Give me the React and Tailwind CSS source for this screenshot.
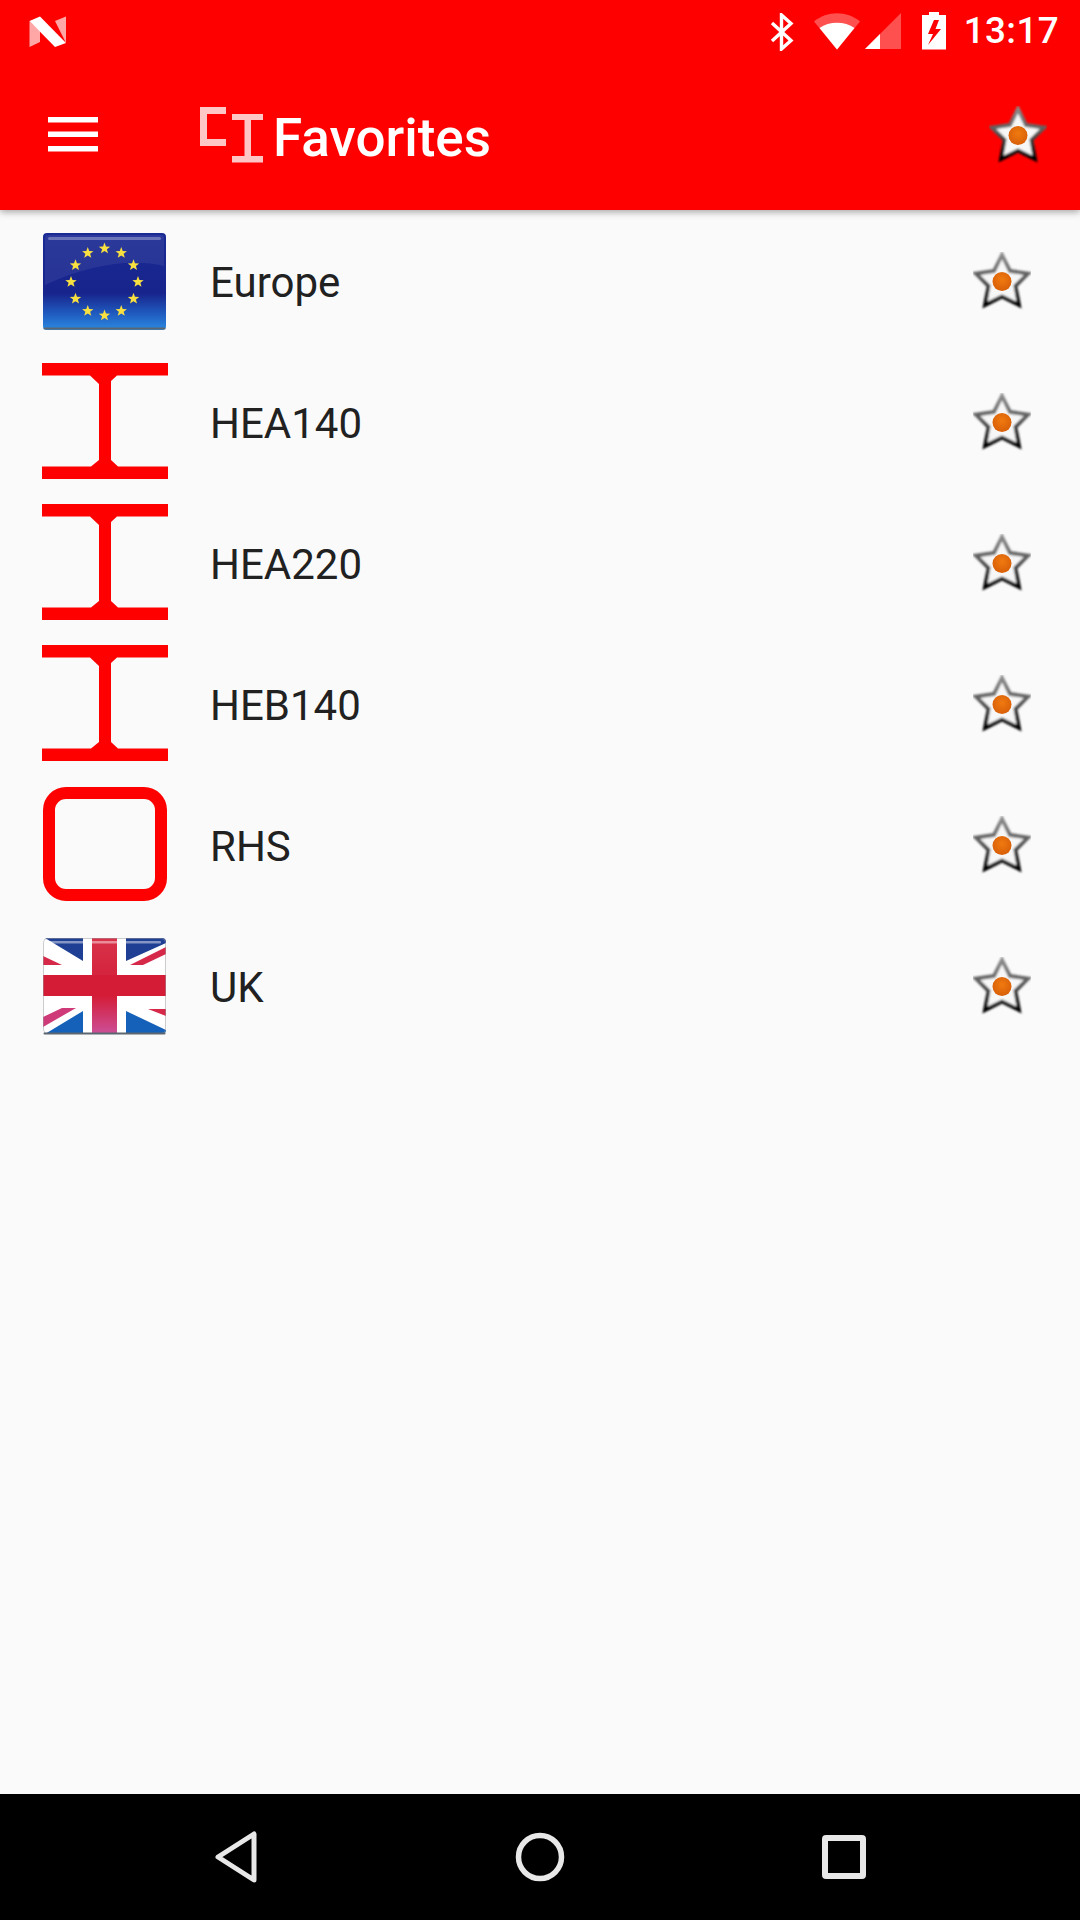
const items = [
  { name: "Europe", icon: "eu" },
  { name: "HEA140", icon: "beam" },
  { name: "HEA220", icon: "beam" },
  { name: "HEB140", icon: "beam" },
  { name: "RHS", icon: "rhs" },
  { name: "UK", icon: "uk" },
];

const NougatLogo = () => (
  <svg width="38" height="32" viewBox="0 0 38 32" className="ml-[29px] mt-[16px]">
    <polygon points="0.5,5 11,15 11,26 0.5,31" fill="#ffa6a6" />
    <polygon points="26,5 37,0.5 37,27" fill="#ffa6a6" />
    <polygon points="0.5,5 11,0.5 37,27 26,31" fill="#fff" />
  </svg>
);

const Bluetooth = () => (
  <svg width="24" height="38" viewBox="0 0 24 38" fill="none" stroke="#fff" strokeWidth="3.4">
    <path d="M2 10 L21 27.5 L11.5 36 V2 L21 10.5 L2 28" />
  </svg>
);

const Wifi = () => (
  <svg width="46" height="37" viewBox="0 0 46 37">
    <path d="M0 8.5 C13 -2.5 33 -2.5 46 8.5 L23 36.5 Z" fill="#ff5050" />
    <path d="M5.5 15 C15 8 31 8 40.5 15 L23 36.5 Z" fill="#fff" />
  </svg>
);

const Signal = () => (
  <svg width="36" height="37" viewBox="0 0 36 37">
    <polygon points="36,0 36,36 0,36" fill="#ff5050" />
    <polygon points="15,21 15,36 0,36" fill="#fff" />
  </svg>
);

const Battery = () => (
  <svg width="24" height="38" viewBox="0 0 24 38">
    <path d="M7 0 H17 V3 H24 V37.5 H0 V3 H7 Z" fill="#fff" />
    <polygon points="12,8 6,22 11,22 6,33 19,17 13.5,17 17,8" fill="#ff0000" />
  </svg>
);

const Hamburger = () => (
  <svg width="50" height="36" viewBox="0 0 50 36" fill="#fff">
    <rect x="0" y="0" width="50" height="5.5" />
    <rect x="0" y="14.5" width="50" height="5.5" />
    <rect x="0" y="29" width="50" height="5.5" />
  </svg>
);

const TitleIcon = () => (
  <svg width="63" height="56" viewBox="0 0 63 56" fill="#ffc6c6">
    <path d="M0 0 H26 V7 H7 V32 H26 V39 H0 Z" />
    <path d="M32 7 H63 V13 H51 V49 H63 V55.5 H32 V49 H44.5 V13 H32 Z" />
  </svg>
);

const FavStar = ({ id }) => (
  <svg width="58" height="58" viewBox="0 0 58 58">
    <defs>
      <linearGradient id={id} x1="0" y1="0" x2="0" y2="1">
        <stop offset="0" stopColor="#8a8a8a" />
        <stop offset="0.45" stopColor="#5a5a5a" />
        <stop offset="1" stopColor="#000" />
      </linearGradient>
      <radialGradient id={id + "-dot"} cx="0.5" cy="0.4" r="0.6">
        <stop offset="0" stopColor="#f07a10" />
        <stop offset="1" stopColor="#d85f08" />
      </radialGradient>
      <filter id={id + "-soft"} x="-10%" y="-10%" width="120%" height="120%">
        <feGaussianBlur stdDeviation="0.8" />
      </filter>
    </defs>
    <polygon
      points="29,3 37,19 55,21.5 42.5,34 46,53 29,44.5 12,53 15.5,34 3,21.5 21,19"
      fill="#f7f7f7"
      stroke={`url(#${id})`}
      strokeWidth="3.8"
      strokeLinejoin="miter"
      filter={`url(#${id}-soft)`}
    />
    <circle cx="29" cy="29.5" r="9.5" fill={`url(#${id}-dot)`} />
  </svg>
);

const Beam = () => (
  <svg width="126" height="116" viewBox="0 0 126 116" fill="#ff0000">
    <path d="M0 0 H126 V12.5 H75 L69 18 V97 L76 103.5 H126 V116 H0 V103.5 H49 L57 97 V21 L48 12.5 H0 Z" />
  </svg>
);

const Rhs = () => (
  <svg width="124" height="114" viewBox="0 0 124 114" fill="none">
    <rect x="6" y="6" width="112" height="102" rx="17" stroke="#ff0000" strokeWidth="12" />
  </svg>
);

const starPoints = (cx, cy, r) => {
  const pts = [];
  for (let i = 0; i < 10; i++) {
    const rad = i % 2 === 0 ? r : r * 0.42;
    const a = (Math.PI / 5) * i - Math.PI / 2;
    pts.push(`${cx + rad * Math.cos(a)},${cy + rad * Math.sin(a)}`);
  }
  return pts.join(" ");
};

const EuFlag = () => (
  <svg width="123" height="97" viewBox="0 0 123 97">
    <defs>
      <linearGradient id="eu-bg" x1="0" y1="0" x2="0" y2="1">
        <stop offset="0" stopColor="#1a2a94" />
        <stop offset="0.62" stopColor="#17248c" />
        <stop offset="0.85" stopColor="#2160c4" />
        <stop offset="1" stopColor="#2b8ae0" />
      </linearGradient>
    </defs>
    <rect x="0" y="0" width="123" height="97" rx="4" fill="url(#eu-bg)" />
    <path d="M2 5 Q2 2 5 2 H118 Q121 2 121 5 V33 C90 26 50 30 2 52 Z" fill="#fff" opacity="0.07" />
    <rect x="5" y="4" width="113" height="3" rx="1.5" fill="#fff" opacity="0.3" />
    <rect x="0.5" y="94.5" width="122" height="2" rx="1" fill="#5c6670" />
    {Array.from({ length: 12 }).map((_, i) => {
      const a = (Math.PI / 6) * i - Math.PI / 2;
      return (
        <polygon
          key={i}
          points={starPoints(61.5 + 33.5 * Math.cos(a), 49 + 33.5 * Math.sin(a), 6)}
          fill="#f8e040"
        />
      );
    })}
  </svg>
);

const UkFlag = () => (
  <svg width="123" height="97" viewBox="0 0 123 97">
    <defs>
      <linearGradient id="uk-red" x1="0" y1="0" x2="0" y2="1">
        <stop offset="0" stopColor="#d8324a" />
        <stop offset="0.6" stopColor="#d41c36" />
        <stop offset="1" stopColor="#cc5098" />
      </linearGradient>
      <clipPath id="uk-clip">
        <rect x="0" y="0" width="123" height="96" rx="4" />
      </clipPath>
    </defs>
    <g clipPath="url(#uk-clip)">
      <rect x="0" y="0" width="123" height="96" fill="#fff" />
      <polygon points="2,0 40,0 40,23" fill="#1f3f94" />
      <polygon points="83,0 123,0 123,5 83,23" fill="#1f3f94" />
      <polygon points="2,96 40,73 40,96" fill="#1560b8" />
      <polygon points="83,73 123,92 123,96 83,96" fill="#1560b8" />
      <polygon points="0,18 19,27 0,27" fill="#d6294a" />
      <polygon points="87,27 123,9 123,16 100,27" fill="#d6294a" />
      <polygon points="0,79 19,70 33,70 0,89" fill="#cf3a78" />
      <polygon points="105,71 123,71 123,78" fill="#d6294a" />
      <rect x="49" y="0" width="25" height="96" fill="url(#uk-red)" />
      <rect x="0" y="37" width="123" height="21" fill="#d41c36" />
      <rect x="5" y="3" width="113" height="2.5" rx="1" fill="#fff" opacity="0.45" />
      <rect x="0.5" y="0.5" width="122" height="95" rx="4" fill="none" stroke="#9a9a9a" strokeOpacity="0.5" />
    </g>
    <rect x="0.5" y="94.5" width="122" height="2" rx="1" fill="#5c6670" />
  </svg>
);

const RowIcon = ({ type }) => {
  if (type === "eu") return <div className="mr-[2px] mt-[2px]"><EuFlag /></div>;
  if (type === "uk") return <div className="mr-[2px] mt-[2px]"><UkFlag /></div>;
  if (type === "rhs") return <div className="mb-[2px]"><Rhs /></div>;
  return <div className="mb-[2px]"><Beam /></div>;
};

const App = () => {
  return (
    <div className="w-[1080px] h-[1920px] flex flex-col bg-[#fafafa] font-['Roboto',sans-serif] overflow-hidden">
      <div className="relative z-10 bg-[#ff0000] shadow-[0_2px_7px_rgba(0,0,0,0.35)]">
        <div className="h-[72px] flex items-start justify-between">
          <NougatLogo />
          <div className="flex items-start pt-[12px] pr-[21px]">
            <div className="mt-px"><Bluetooth /></div>
            <div className="ml-[20px] mt-px"><Wifi /></div>
            <div className="ml-[5px] mt-px"><Signal /></div>
            <div className="ml-[21px]"><Battery /></div>
            <span className="ml-[18px] text-[36.75px] leading-[38px] font-medium text-white tracking-[0.4px]">13:17</span>
          </div>
        </div>
        <div className="h-[138px] pb-[12px] flex items-center">
          <div className="ml-[48px]"><Hamburger /></div>
          <div className="ml-[102px]"><TitleIcon /></div>
          <h1 className="ml-[10px] mt-[7px] text-[53px] font-medium text-white leading-none">Favorites</h1>
          <div className="ml-auto mr-[33px]"><FavStar id="bar-star" /></div>
        </div>
      </div>

      <div className="flex-1">
        {items.map((item, i) => (
          <div key={item.name} className="h-[141px] flex items-center pl-[42px] pr-[49px]">
            <div className="w-[126px] flex justify-center"><RowIcon type={item.icon} /></div>
            <span className="ml-[42px] mt-[4px] text-[42px] text-[#212121] leading-none">{item.name}</span>
            <div className="ml-auto"><FavStar id={`row-star-${i}`} /></div>
          </div>
        ))}
      </div>

      <div className="h-[126px] bg-black flex items-center">
        <svg width="44" height="52" viewBox="0 0 44 52" className="ml-[214px]" fill="none" stroke="#e8e8e8" strokeWidth="5" strokeLinejoin="round">
          <polygon points="4,26 40,3 40,49" />
        </svg>
        <svg width="50" height="50" viewBox="0 0 50 50" className="ml-[257px]" fill="none" stroke="#e8e8e8" strokeWidth="5.5">
          <circle cx="25" cy="25" r="21.5" />
        </svg>
        <svg width="44" height="44" viewBox="0 0 44 44" className="ml-[257px]" fill="none" stroke="#e8e8e8" strokeWidth="6" strokeLinejoin="round">
          <rect x="3" y="3" width="38" height="38" rx="1" />
        </svg>
      </div>
    </div>
  );
};

export default App;
